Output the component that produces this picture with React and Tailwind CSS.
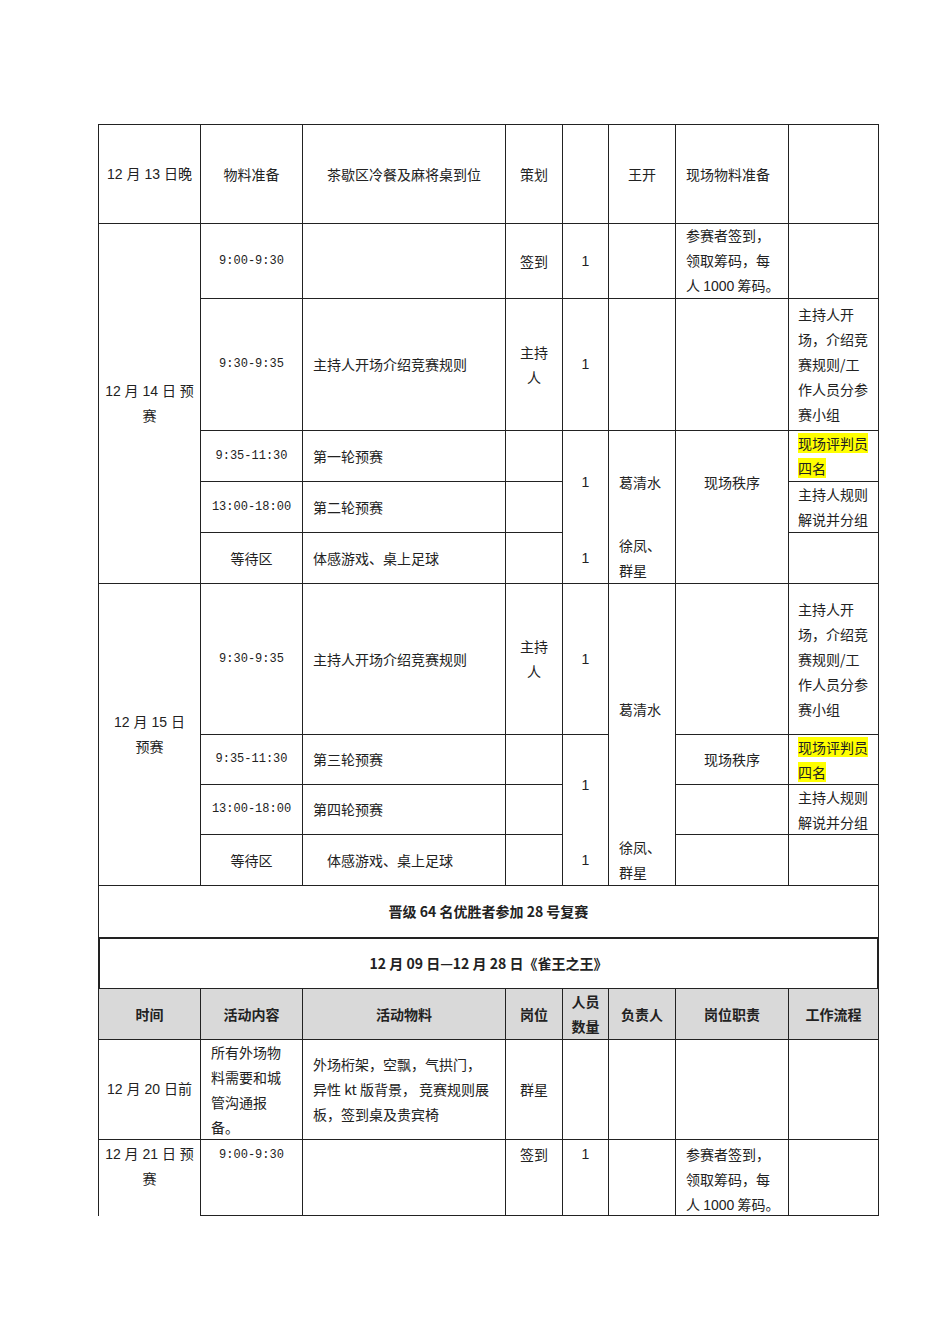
import React from "react";

function C({ className = "", children }) {
  return (
    <div className={"border-r border-b border-[#222] flex items-center " + className}>
      {children}
    </div>
  );
}

const mono = "font-['Liberation_Mono',monospace] text-[12px]";
const hl = "bg-[#ffff00]";

export default function App() {
  return (
    <div className="w-[950px] min-h-[1344px] bg-white pt-[124px] pl-[98px] font-['Noto_Sans_CJK_SC',sans-serif] text-[14px] leading-[25px] text-[#222]">
      <div className="grid w-[781px] border-l border-t border-[#222] grid-cols-[102px_102px_203px_57px_46px_67px_113px_90px] grid-rows-[99px_75px_132px_51px_51px_51px_151px_50px_50px_51px_52px_51px_51px_100px_76px]">
        {/* Row 1 */}
        <C className="col-start-1 row-start-1 justify-center font-['Liberation_Sans','Noto_Sans_CJK_SC',sans-serif]">12 月 13 日晚</C>
        <C className="col-start-2 row-start-1 justify-center">物料准备</C>
        <C className="col-start-3 row-start-1 justify-center">茶歇区冷餐及麻将桌到位</C>
        <C className="col-start-4 row-start-1 justify-center">策划</C>
        <C className="col-start-5 row-start-1 justify-center"></C>
        <C className="col-start-6 row-start-1 justify-center">王开</C>
        <C className="col-start-7 row-start-1 pl-[10px]">现场物料准备</C>
        <C className="col-start-8 row-start-1"></C>

        {/* 12月14日 block */}
        <C className="col-start-1 row-start-2 row-span-5 justify-center text-center font-['Liberation_Sans','Noto_Sans_CJK_SC',sans-serif]">
          <div>12 月 14 日 预<br />赛</div>
        </C>
        <C className={"col-start-2 row-start-2 justify-center " + mono}>9:00-9:30</C>
        <C className="col-start-3 row-start-2"></C>
        <C className="col-start-4 row-start-2 justify-center">签到</C>
        <C className="col-start-5 row-start-2 justify-center font-['Liberation_Sans',sans-serif]">1</C>
        <C className="col-start-6 row-start-2"></C>
        <C className="col-start-7 row-start-2 pl-[10px]">
          <div>参赛者签到，<br />领取筹码，每<br />人 <span className="font-['Liberation_Sans',sans-serif]">1000</span> 筹码。</div>
        </C>
        <C className="col-start-8 row-start-2"></C>

        <C className={"col-start-2 row-start-3 justify-center " + mono}>9:30-9:35</C>
        <C className="col-start-3 row-start-3 pl-[10px]">主持人开场介绍竞赛规则</C>
        <C className="col-start-4 row-start-3 justify-center text-center">
          <div>主持<br />人</div>
        </C>
        <C className="col-start-5 row-start-3 justify-center font-['Liberation_Sans',sans-serif]">1</C>
        <C className="col-start-6 row-start-3"></C>
        <C className="col-start-7 row-start-3"></C>
        <C className="col-start-8 row-start-3 pl-[9px]">
          <div>主持人开<br />场，介绍竞<br />赛规则/工<br />作人员分参<br />赛小组</div>
        </C>

        <C className={"col-start-2 row-start-4 justify-center " + mono}>9:35-11:30</C>
        <C className="col-start-3 row-start-4 pl-[10px]">第一轮预赛</C>
        <C className="col-start-4 row-start-4"></C>
        <C className="col-start-5 row-start-4 row-span-3 !items-stretch">
          <div className="flex flex-col w-full font-['Liberation_Sans',sans-serif]">
            <div className="h-[102px] flex items-center justify-center">1</div>
            <div className="flex-1 flex items-center justify-center">1</div>
          </div>
        </C>
        <C className="col-start-6 row-start-4 row-span-3 !items-stretch">
          <div className="flex flex-col w-full">
            <div className="h-[102px] flex items-center pl-[10px]">葛清水</div>
            <div className="flex-1 flex items-center pl-[10px]">
              <div>徐凤、<br />群星</div>
            </div>
          </div>
        </C>
        <C className="col-start-7 row-start-4 row-span-3 !items-start">
          <div className="h-[102px] w-full flex items-center justify-center">现场秩序</div>
        </C>
        <C className="col-start-8 row-start-4 pl-[9px]">
          <div>
            <span className={hl}>现场评判员</span>
            <br />
            <span className={hl}>四名</span>
          </div>
        </C>

        <C className={"col-start-2 row-start-5 justify-center " + mono}>13:00-18:00</C>
        <C className="col-start-3 row-start-5 pl-[10px]">第二轮预赛</C>
        <C className="col-start-4 row-start-5"></C>
        <C className="col-start-8 row-start-5 pl-[9px]">
          <div>主持人规则<br />解说并分组</div>
        </C>

        <C className="col-start-2 row-start-6 justify-center">等待区</C>
        <C className="col-start-3 row-start-6 pl-[10px]">体感游戏、桌上足球</C>
        <C className="col-start-4 row-start-6"></C>
        <C className="col-start-8 row-start-6"></C>

        {/* 12月15日 block */}
        <C className="col-start-1 row-start-7 row-span-4 justify-center text-center font-['Liberation_Sans','Noto_Sans_CJK_SC',sans-serif]">
          <div>12 月 15 日<br />预赛</div>
        </C>
        <C className={"col-start-2 row-start-7 justify-center " + mono}>9:30-9:35</C>
        <C className="col-start-3 row-start-7 pl-[10px]">主持人开场介绍竞赛规则</C>
        <C className="col-start-4 row-start-7 justify-center text-center">
          <div>主持<br />人</div>
        </C>
        <C className="col-start-5 row-start-7 justify-center font-['Liberation_Sans',sans-serif]">1</C>
        <C className="col-start-6 row-start-7 row-span-4 !items-stretch">
          <div className="flex flex-col w-full">
            <div className="h-[252px] flex items-center pl-[10px]">葛清水</div>
            <div className="flex-1 flex items-center pl-[10px]">
              <div>徐凤、<br />群星</div>
            </div>
          </div>
        </C>
        <C className="col-start-7 row-start-7"></C>
        <C className="col-start-8 row-start-7 pl-[9px]">
          <div>主持人开<br />场，介绍竞<br />赛规则/工<br />作人员分参<br />赛小组</div>
        </C>

        <C className={"col-start-2 row-start-8 justify-center " + mono}>9:35-11:30</C>
        <C className="col-start-3 row-start-8 pl-[10px]">第三轮预赛</C>
        <C className="col-start-4 row-start-8"></C>
        <C className="col-start-5 row-start-8 row-span-3 !items-stretch">
          <div className="flex flex-col w-full font-['Liberation_Sans',sans-serif]">
            <div className="h-[100px] flex items-center justify-center">1</div>
            <div className="flex-1 flex items-center justify-center">1</div>
          </div>
        </C>
        <C className="col-start-7 row-start-8 justify-center">现场秩序</C>
        <C className="col-start-8 row-start-8 pl-[9px]">
          <div>
            <span className={hl}>现场评判员</span>
            <br />
            <span className={hl}>四名</span>
          </div>
        </C>

        <C className={"col-start-2 row-start-9 justify-center " + mono}>13:00-18:00</C>
        <C className="col-start-3 row-start-9 pl-[10px]">第四轮预赛</C>
        <C className="col-start-4 row-start-9"></C>
        <C className="col-start-7 row-start-9"></C>
        <C className="col-start-8 row-start-9 pl-[9px]">
          <div>主持人规则<br />解说并分组</div>
        </C>

        <C className="col-start-2 row-start-10 justify-center">等待区</C>
        <C className="col-start-3 row-start-10 pl-[24px]">体感游戏、桌上足球</C>
        <C className="col-start-4 row-start-10"></C>
        <C className="col-start-7 row-start-10"></C>
        <C className="col-start-8 row-start-10"></C>

        {/* Section titles */}
        <C className="col-start-1 col-span-8 row-start-11 justify-center font-bold">
          晋级 64 名优胜者参加 28 号复赛
        </C>
        <C className="col-start-1 col-span-8 row-start-12 justify-center font-bold shadow-[inset_1px_1px_0_#222,inset_-1px_0_0_#222]">
          12 月 09 日—12 月 28 日《雀王之王》
        </C>

        {/* Header */}
        <C className="col-start-1 row-start-13 justify-center font-bold bg-[#d9d9d9]">时间</C>
        <C className="col-start-2 row-start-13 justify-center font-bold bg-[#d9d9d9]">活动内容</C>
        <C className="col-start-3 row-start-13 justify-center font-bold bg-[#d9d9d9]">活动物料</C>
        <C className="col-start-4 row-start-13 justify-center font-bold bg-[#d9d9d9]">岗位</C>
        <C className="col-start-5 row-start-13 justify-center font-bold bg-[#d9d9d9] text-center">
          <div>人员<br />数量</div>
        </C>
        <C className="col-start-6 row-start-13 justify-center font-bold bg-[#d9d9d9]">负责人</C>
        <C className="col-start-7 row-start-13 justify-center font-bold bg-[#d9d9d9]">岗位职责</C>
        <C className="col-start-8 row-start-13 justify-center font-bold bg-[#d9d9d9]">工作流程</C>

        {/* Row 14 */}
        <C className="col-start-1 row-start-14 justify-center font-['Liberation_Sans','Noto_Sans_CJK_SC',sans-serif]">12 月 20 日前</C>
        <C className="col-start-2 row-start-14 pl-[10px]">
          <div>所有外场物<br />料需要和城<br />管沟通报<br />备。</div>
        </C>
        <C className="col-start-3 row-start-14 pl-[10px]">
          <div>外场桁架，空飘，气拱门，<br />异性 kt 版背景， 竞赛规则展<br />板，签到桌及贵宾椅</div>
        </C>
        <C className="col-start-4 row-start-14 justify-center">群星</C>
        <C className="col-start-5 row-start-14"></C>
        <C className="col-start-6 row-start-14"></C>
        <C className="col-start-7 row-start-14"></C>
        <C className="col-start-8 row-start-14"></C>

        {/* Row 15 */}
        <div className="col-start-1 row-start-15 border-r border-[#222] flex justify-center text-center pt-[2px] font-['Liberation_Sans','Noto_Sans_CJK_SC',sans-serif]">
          <div>12 月 21 日 预<br />赛</div>
        </div>
        <C className={"col-start-2 row-start-15 justify-center !items-start pt-[3px] " + mono}>9:00-9:30</C>
        <C className="col-start-3 row-start-15"></C>
        <C className="col-start-4 row-start-15 justify-center !items-start pt-[2px]">签到</C>
        <C className="col-start-5 row-start-15 justify-center !items-start pt-[2px] font-['Liberation_Sans',sans-serif]">1</C>
        <C className="col-start-6 row-start-15"></C>
        <C className="col-start-7 row-start-15 pl-[10px] !items-start pt-[2px]">
          <div>参赛者签到，<br />领取筹码，每<br />人 <span className="font-['Liberation_Sans',sans-serif]">1000</span> 筹码。</div>
        </C>
        <C className="col-start-8 row-start-15"></C>
      </div>
    </div>
  );
}
